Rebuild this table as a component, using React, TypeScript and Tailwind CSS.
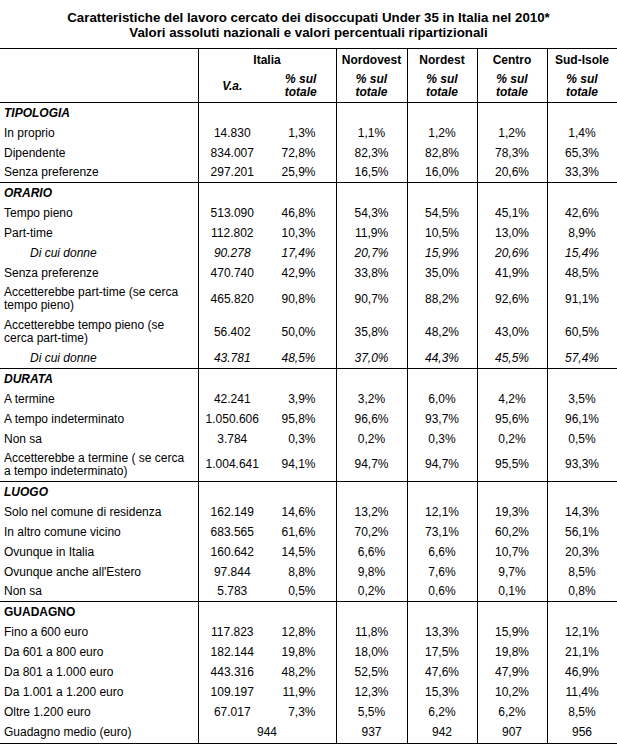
import React from 'react';

type Row =
  | { kind: 'section'; label: string; italic?: boolean }
  | { kind: 'data'; label: React.ReactNode; va: string; values: string[]; sub?: boolean; tall?: boolean }
  | { kind: 'avg'; label: string; values: string[] };

const ROWS: Row[] = [
  { kind: 'section', label: 'TIPOLOGIA', italic: true },
  { kind: 'data', label: 'In proprio', va: '14.830', values: ['1,3%', '1,1%', '1,2%', '1,2%', '1,4%'] },
  { kind: 'data', label: 'Dipendente', va: '834.007', values: ['72,8%', '82,3%', '82,8%', '78,3%', '65,3%'] },
  { kind: 'data', label: 'Senza preferenze', va: '297.201', values: ['25,9%', '16,5%', '16,0%', '20,6%', '33,3%'] },
  { kind: 'section', label: 'ORARIO', italic: true },
  { kind: 'data', label: 'Tempo pieno', va: '513.090', values: ['46,8%', '54,3%', '54,5%', '45,1%', '42,6%'] },
  { kind: 'data', label: 'Part-time', va: '112.802', values: ['10,3%', '11,9%', '10,5%', '13,0%', '8,9%'] },
  { kind: 'data', label: 'Di cui donne', sub: true, va: '90.278', values: ['17,4%', '20,7%', '15,9%', '20,6%', '15,4%'] },
  { kind: 'data', label: 'Senza preferenze', va: '470.740', values: ['42,9%', '33,8%', '35,0%', '41,9%', '48,5%'] },
  {
    kind: 'data',
    tall: true,
    label: (
      <>
        Accetterebbe part-time (se cerca
        <br />
        tempo pieno)
      </>
    ),
    va: '465.820',
    values: ['90,8%', '90,7%', '88,2%', '92,6%', '91,1%'],
  },
  {
    kind: 'data',
    tall: true,
    label: (
      <>
        Accetterebbe tempo pieno (se
        <br />
        cerca part-time)
      </>
    ),
    va: '56.402',
    values: ['50,0%', '35,8%', '48,2%', '43,0%', '60,5%'],
  },
  { kind: 'data', label: 'Di cui donne', sub: true, va: '43.781', values: ['48,5%', '37,0%', '44,3%', '45,5%', '57,4%'] },
  { kind: 'section', label: 'DURATA', italic: true },
  { kind: 'data', label: 'A termine', va: '42.241', values: ['3,9%', '3,2%', '6,0%', '4,2%', '3,5%'] },
  { kind: 'data', label: 'A tempo indeterminato', va: '1.050.606', values: ['95,8%', '96,6%', '93,7%', '95,6%', '96,1%'] },
  { kind: 'data', label: 'Non sa', va: '3.784', values: ['0,3%', '0,2%', '0,3%', '0,2%', '0,5%'] },
  {
    kind: 'data',
    tall: true,
    label: (
      <>
        Accetterebbe a termine ( se cerca
        <br />a tempo indeterminato)
      </>
    ),
    va: '1.004.641',
    values: ['94,1%', '94,7%', '94,7%', '95,5%', '93,3%'],
  },
  { kind: 'section', label: 'LUOGO', italic: true },
  { kind: 'data', label: 'Solo nel comune di residenza', va: '162.149', values: ['14,6%', '13,2%', '12,1%', '19,3%', '14,3%'] },
  { kind: 'data', label: 'In altro comune vicino', va: '683.565', values: ['61,6%', '70,2%', '73,1%', '60,2%', '56,1%'] },
  { kind: 'data', label: 'Ovunque in Italia', va: '160.642', values: ['14,5%', '6,6%', '6,6%', '10,7%', '20,3%'] },
  { kind: 'data', label: "Ovunque anche all'Estero", va: '97.844', values: ['8,8%', '9,8%', '7,6%', '9,7%', '8,5%'] },
  { kind: 'data', label: 'Non sa', va: '5.783', values: ['0,5%', '0,2%', '0,6%', '0,1%', '0,8%'] },
  { kind: 'section', label: 'GUADAGNO' },
  { kind: 'data', label: 'Fino a 600 euro', va: '117.823', values: ['12,8%', '11,8%', '13,3%', '15,9%', '12,1%'] },
  { kind: 'data', label: 'Da 601 a 800 euro', va: '182.144', values: ['19,8%', '18,0%', '17,5%', '19,8%', '21,1%'] },
  { kind: 'data', label: 'Da 801 a 1.000 euro', va: '443.316', values: ['48,2%', '52,5%', '47,6%', '47,9%', '46,9%'] },
  { kind: 'data', label: 'Da 1.001 a 1.200 euro', va: '109.197', values: ['11,9%', '12,3%', '15,3%', '10,2%', '11,4%'] },
  { kind: 'data', label: 'Oltre 1.200 euro', va: '67.017', values: ['7,3%', '5,5%', '6,2%', '6,2%', '8,5%'] },
  { kind: 'avg', label: 'Guadagno medio (euro)', values: ['944', '937', '942', '907', '956'] },
];

const REGIONS = ['Nordovest', 'Nordest', 'Centro', 'Sud-Isole'];

export default function App() {
  return (
    <div className="w-[617px] bg-white text-black text-[12px] font-['Liberation_Sans',Arial,sans-serif]">
      <div className="pt-[10px] pb-[8px] text-center font-bold text-[13.3px] leading-[15px]">
        <div>Caratteristiche del lavoro cercato dei disoccupati Under 35 in Italia nel 2010*</div>
        <div>Valori assoluti nazionali e valori percentuali ripartizionali</div>
      </div>

      <table className="w-[617px] table-fixed border-collapse">
        <colgroup>
          <col className="w-[198px]" />
          <col className="w-[68px]" />
          <col className="w-[70px]" />
          <col className="w-[71px]" />
          <col className="w-[70px]" />
          <col className="w-[70px]" />
          <col className="w-[70px]" />
        </colgroup>
        <thead>
          <tr className="h-[22px] border-t border-black font-bold">
            <td className="border-r border-black" rowSpan={2} />
            <td colSpan={2} className="text-center border-r border-black">
              Italia
            </td>
            {REGIONS.map((r) => (
              <td key={r} className="text-center border-r border-black">
                {r}
              </td>
            ))}
          </tr>
          <tr className="h-[32px] border-b border-black font-bold italic leading-[13px]">
            <td className="text-center">V.a.</td>
            <td className="text-center border-r border-black">
              % sul
              <br />
              totale
            </td>
            {REGIONS.map((r) => (
              <td key={r} className="text-center border-r border-black">
                % sul
                <br />
                totale
              </td>
            ))}
          </tr>
        </thead>
        <tbody>
          {ROWS.map((row, i) => {
            if (row.kind === 'section') {
              return (
                <tr key={i} className={`h-[20px] font-bold ${i > 0 ? 'border-t border-black' : ''}`}>
                  <td className={`pl-[4px] border-r border-black ${row.italic ? 'italic' : ''}`}>{row.label}</td>
                  <td />
                  <td className="border-r border-black" />
                  {REGIONS.map((r) => (
                    <td key={r} className="border-r border-black" />
                  ))}
                </tr>
              );
            }
            if (row.kind === 'avg') {
              return (
                <tr key={i} className="h-[22px] border-b border-black">
                  <td className="pl-[4px] border-r border-black">{row.label}</td>
                  <td colSpan={2} className="text-center border-r border-black">
                    {row.values[0]}
                  </td>
                  {row.values.slice(1).map((v, j) => (
                    <td key={j} className="text-center border-r border-black">
                      {v}
                    </td>
                  ))}
                </tr>
              );
            }
            return (
              <tr key={i} className={`${row.tall ? 'h-[33px] leading-[13px]' : 'h-[20px]'} ${row.sub ? 'italic' : ''}`}>
                <td className={`border-r border-black ${row.sub ? 'pl-[30px]' : 'pl-[4px]'}`}>{row.label}</td>
                <td className="text-center">{row.va}</td>
                <td className="text-right pr-[20px] border-r border-black">{row.values[0]}</td>
                {row.values.slice(1).map((v, j) => (
                  <td key={j} className="text-center border-r border-black">
                    {v}
                  </td>
                ))}
              </tr>
            );
          })}
        </tbody>
      </table>
    </div>
  );
}
